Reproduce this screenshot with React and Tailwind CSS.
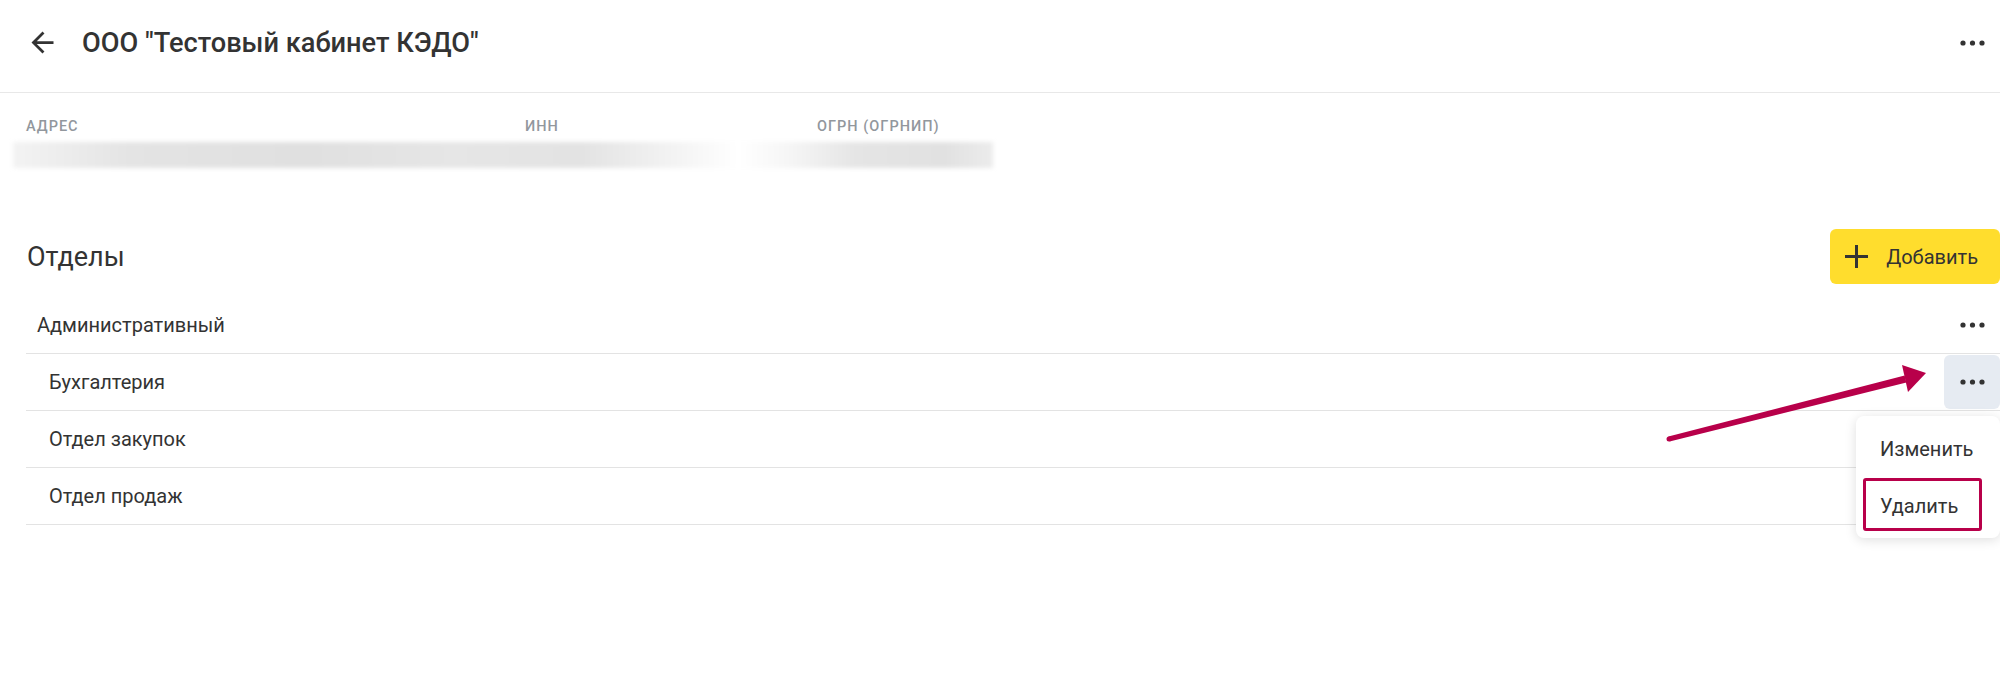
import React from 'react';

const BackIcon = () => (
  <svg width="33" height="33" viewBox="0 0 24 24" fill="#333333">
    <path d="M20 11H7.83l5.59-5.59L12 4l-8 8 8 8 1.41-1.41L7.83 13H20v-2z" />
  </svg>
);

const Dots = () => (
  <svg width="25" height="6" viewBox="0 0 25 6" fill="#333333">
    <circle cx="3" cy="3" r="2.6" />
    <circle cx="12.5" cy="3" r="2.6" />
    <circle cx="22" cy="3" r="2.6" />
  </svg>
);

const PlusIcon = () => (
  <svg width="23" height="23" viewBox="0 0 23 23" stroke="#333333" strokeWidth="3">
    <path d="M11.5 0v23M0 11.5h23" />
  </svg>
);

const departments = [
  { id: 1, name: 'Административный', child: false },
  { id: 2, name: 'Бухгалтерия', child: true, active: true },
  { id: 3, name: 'Отдел закупок', child: true },
  { id: 4, name: 'Отдел продаж', child: true },
];

const App = () => {
  return (
    <div className="relative min-h-screen w-full overflow-hidden bg-white font-['Roboto','Inter',sans-serif] text-[#333333]">
      <header className="flex h-[93px] items-center border-b border-[#e8e8e8] pb-[7px] pl-[26px]">
        <button className="flex h-[33px] w-[33px] items-center justify-center">
          <BackIcon />
        </button>
        <h1 className="ml-[23px] text-[27.2px] leading-[32px] font-medium">ООО "Тестовый кабинет КЭДО"</h1>
        <button className="ml-auto flex h-[54px] w-[56px] items-center justify-center">
          <Dots />
        </button>
      </header>

      <section className="pt-[25px]">
        <div className="flex pl-[26px] text-[14.5px] leading-[18px] font-medium uppercase tracking-[0.07em] text-[#92979d]">
          <div className="w-[499px]">Адрес</div>
          <div className="w-[292px]">ИНН</div>
          <div>ОГРН (ОГРНИП)</div>
        </div>
        <div className="ml-[13px] mt-[6px] h-[26px] w-[980px] blur-[2px] bg-[linear-gradient(90deg,#f3f3f3_0%,#e4e4e4_12%,#e0e0e0_30%,#e6e6e6_45%,#e3e3e3_58%,#f4f4f4_68%,#ffffff_74%,#f6f6f6_79%,#e5e5e5_86%,#e1e1e1_95%,#ececec_100%)]" />
      </section>

      <section className="mt-[61px] pl-[26px]">
        <div className="flex h-[55px] items-center justify-between">
          <h2 className="pl-[1px] text-[27px] leading-[32px] font-normal">Отделы</h2>
          <button className="flex h-[55px] items-center rounded-[6px] bg-[#ffdd2d] pl-[15px] pr-[22px] text-[20px]">
            <PlusIcon />
            <span className="ml-[18px]">Добавить</span>
          </button>
        </div>

        <ul className="mt-[13px]">
          {departments.map(dep => (
            <li
              key={dep.id}
              className={`relative flex h-[57px] items-center border-b border-[#e3e3e3] ${dep.child ? 'pl-[23px]' : 'pl-[11px]'}`}
            >
              <span className="text-[20px] leading-[24px]">{dep.name}</span>
              <button
                className={`ml-auto flex h-[54px] w-[56px] items-center justify-center rounded-[6px] ${dep.active ? 'bg-[#e6ebf2]' : ''}`}
              >
                <Dots />
              </button>
              {dep.active ? (
                <div className="absolute right-0 top-[62px] z-10 w-[144px] rounded-[8px] bg-white py-[4px] shadow-[0_2px_12px_rgba(0,0,0,0.13)]">
                  <div className="flex h-[57px] items-center pl-[24px] text-[20px]">Изменить</div>
                  <div className="flex h-[57px] items-center pl-[24px] text-[20px]">Удалить</div>
                  <div className="absolute left-[7px] top-[62px] h-[53px] w-[119px] rounded-[3px] border-[3px] border-[#b8004a]" />
                </div>
              ) : null}
            </li>
          ))}
        </ul>
      </section>

      <svg
        className="pointer-events-none absolute left-[1660px] top-[355px] z-20"
        width="275"
        height="90"
        viewBox="0 0 275 90"
        fill="#b8004a"
      >
        <polygon points="9.6,86.4 8.4,81.6 244.6,20.6 246.4,27.4" />
        <circle cx="9" cy="84" r="2.5" />
        <polygon points="266,18 242,10 248,37" />
      </svg>
    </div>
  );
};

export default App;
